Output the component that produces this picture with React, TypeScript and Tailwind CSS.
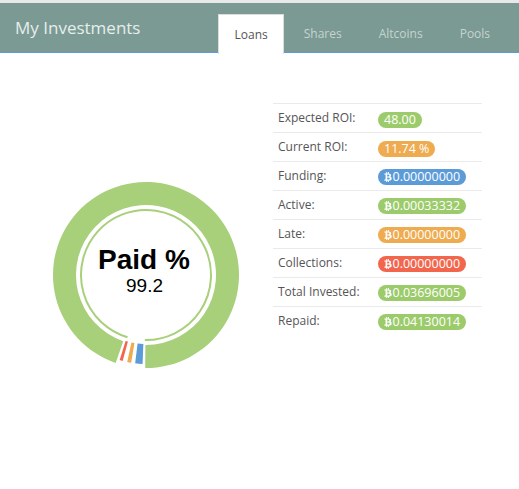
import { FaBtc } from 'react-icons/fa';

const CX = 100;
const CY = 100;

// angle measured clockwise from the bottom of the circle
function pt(r: number, deg: number) {
  const a = (deg * Math.PI) / 180;
  return [CX - r * Math.sin(a), CY + r * Math.cos(a)];
}

function sector(r0: number, r1: number, a0: number, a1: number) {
  const large = a1 - a0 > 180 ? 1 : 0;
  const [x0, y0] = pt(r1, a0);
  const [x1, y1] = pt(r1, a1);
  const [x2, y2] = pt(r0, a1);
  const [x3, y3] = pt(r0, a0);
  return `M${x0} ${y0} A${r1} ${r1} 0 ${large} 1 ${x1} ${y1} L${x2} ${y2} A${r0} ${r0} 0 ${large} 0 ${x3} ${y3} Z`;
}

function arc(r: number, a0: number, a1: number) {
  const large = a1 - a0 > 180 ? 1 : 0;
  const [x0, y0] = pt(r, a0);
  const [x1, y1] = pt(r, a1);
  return `M${x0} ${y0} A${r} ${r} 0 ${large} 1 ${x1} ${y1}`;
}

const rows = [
  { label: 'Expected ROI:', value: '48.00', color: 'bg-[#9ccb6b]', btc: false },
  { label: 'Current ROI:', value: '11.74 %', color: 'bg-[#eeab4f]', btc: false },
  { label: 'Funding:', value: '0.00000000', color: 'bg-[#5b9bd8]', btc: true },
  { label: 'Active:', value: '0.00033332', color: 'bg-[#9ccb6b]', btc: true },
  { label: 'Late:', value: '0.00000000', color: 'bg-[#eeab4f]', btc: true },
  { label: 'Collections:', value: '0.00000000', color: 'bg-[#f2664d]', btc: true },
  { label: 'Total Invested:', value: '0.03696005', color: 'bg-[#9ccb6b]', btc: true },
  { label: 'Repaid:', value: '0.04130014', color: 'bg-[#9ccb6b]', btc: true },
];

const tabs = ['Loans', 'Shares', 'Altcoins', 'Pools'];

function Donut() {
  return (
    <div className="relative w-[200px] h-[200px]">
      <svg width="200" height="200" viewBox="0 0 200 200" className="absolute inset-0">
        <path d={sector(70, 93, 19, 360.5)} fill="#a8d07a" />
        <path d={sector(69, 89, 2.2, 7)} fill="#5b9bd8" />
        <path d={sector(69, 89, 9.6, 12.2)} fill="#eeab4f" />
        <path d={sector(69, 89, 15.2, 17.2)} fill="#f2664d" />
        <path d={arc(65, 16.5, 361)} fill="none" stroke="#a8d07a" strokeWidth="2" />
      </svg>
      <div className="absolute inset-0 flex flex-col items-center justify-center font-['Liberation_Sans',Arial,sans-serif] text-black">
        <div className="text-[28px] font-bold leading-[30px] mt-[-8px] mr-[3px]">Paid %</div>
        <div className="text-[19px] leading-[22px] mr-[2px]">99.2</div>
      </div>
    </div>
  );
}

export default function App() {
  return (
    <div className="w-[519px] h-[489px] bg-white font-['Open_Sans',sans-serif] overflow-hidden">
      <div className="h-[3px] bg-[#e9e9e9]" />
      <div className="h-[50px] bg-[#7a9a93] border-b-[1.5px] border-[#5b9bd8] flex items-end relative">
        <div className="absolute left-[15px] top-[13px] text-[17px] text-[#e6eeec] leading-[24px]">
          My Investments
        </div>
        <div className="ml-[218px] flex gap-[6px] mb-[-1.5px]">
          {tabs.map((t, i) => (
            <div
              key={t}
              className={
                i === 0
                  ? 'h-[39.5px] px-[15.5px] pt-[11px] mr-[-2px] text-[12px] leading-[18px] text-[#555] bg-white border border-b-0 border-[#ddd]'
                  : 'h-[39.5px] px-[15.5px] pt-[11px] text-[12px] leading-[18px] text-[#c6d4d0]'
              }
            >
              {t}
            </div>
          ))}
        </div>
      </div>
      <div className="flex">
        <div className="w-[273px] pl-[45.5px] pt-[122px]">
          <Donut />
        </div>
        <div className="pt-[49.5px] w-[209px]">
          {rows.map((r) => (
            <div key={r.label} className="flex items-center h-[29px] border-t border-[#eaeaea]">
              <div className="w-[105px] pl-[5px] text-[12px] text-[#555]">{r.label}</div>
              <div>
                <span
                  className={`${r.color} inline-flex items-center h-[16px] rounded-full px-[6px] text-[12.5px] leading-[16px] text-white`}
                >
                  {r.btc && <FaBtc className="w-[8px] h-[10px] mr-[0.5px]" />}
                  {r.value}
                </span>
              </div>
            </div>
          ))}
        </div>
      </div>
    </div>
  );
}
